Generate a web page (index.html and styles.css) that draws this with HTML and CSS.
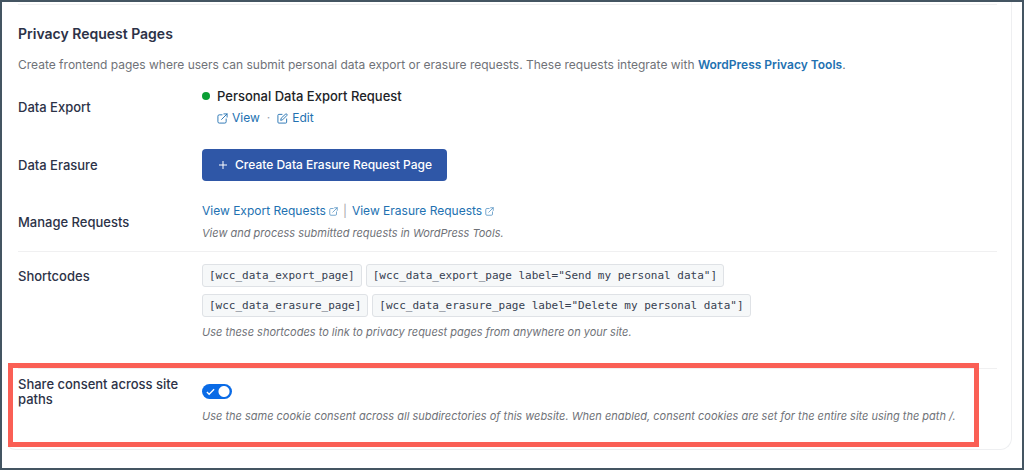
FILE: index.html
```
<!DOCTYPE html>
<html lang="en">
<head>
  <meta charset="utf-8">
  <title>Privacy Request Pages</title>
  <link rel="stylesheet" href="styles.css">
</head>
<body>
  <svg width="0" height="0" class="sprite">
    <symbol id="icon-external" viewBox="0 0 24 24">
      <path d="M11 4H5a3 3 0 0 0-3 3v12a3 3 0 0 0 3 3h12a3 3 0 0 0 3-3v-6M15 2h7v7M22 2L10 14"/>
    </symbol>
    <symbol id="icon-edit" viewBox="0 0 24 24">
      <path d="M11 3H4a2 2 0 0 0-2 2v15a2 2 0 0 0 2 2h15a2 2 0 0 0 2-2v-7M18.500 2.500a2.100 2.100 0 0 1 3 3L12 15l-4 1 1-4z"/>
    </symbol>
  </svg>

  <main class="card">
    <h2>Privacy Request Pages</h2>
    <p class="intro">Create frontend pages where users can submit personal data export or erasure requests. These requests integrate with <a href="#">WordPress Privacy Tools</a>.</p>

    <div class="row row-export">
      <h3>Data Export</h3>
      <div class="field">
        <div class="page-status"><span class="dot"></span>Personal Data Export Request</div>
        <div class="page-actions">
          <a href="#"><svg class="icon"><use href="#icon-external"/></svg>View</a>
          <span class="sep">·</span>
          <a href="#"><svg class="icon"><use href="#icon-edit"/></svg>Edit</a>
        </div>
      </div>
    </div>

    <div class="row row-erasure">
      <h3>Data Erasure</h3>
      <div class="field">
        <button type="button" class="btn">
          <svg class="plus" viewBox="0 0 10 10"><path d="M5 1v8M1 5h8"/></svg>
          Create Data Erasure Request Page
        </button>
      </div>
    </div>

    <div class="row row-manage">
      <h3>Manage Requests</h3>
      <div class="field">
        <div class="links">
          <a href="#">View Export Requests<svg class="icon"><use href="#icon-external"/></svg></a>
          <span class="bar">|</span>
          <a href="#">View Erasure Requests<svg class="icon"><use href="#icon-external"/></svg></a>
        </div>
        <p class="help">View and process submitted requests in WordPress Tools.</p>
      </div>
    </div>

    <div class="row row-codes">
      <h3>Shortcodes</h3>
      <div class="field">
        <div class="codes">
          <code>[wcc_data_export_page]</code>
          <code>[wcc_data_export_page label="Send my personal data"]</code>
        </div>
        <div class="codes">
          <code>[wcc_data_erasure_page]</code>
          <code>[wcc_data_erasure_page label="Delete my personal data"]</code>
        </div>
        <p class="help">Use these shortcodes to link to privacy request pages from anywhere on your site.</p>
      </div>
    </div>

    <div class="row row-share">
      <label for="share-consent">Share consent across site paths</label>
      <div class="field">
        <div class="switch">
          <input type="checkbox" id="share-consent" checked>
          <svg class="check" viewBox="0 0 10 10"><path d="M1 5.500l2.500 2.500L9 2.500"/></svg>
        </div>
        <p class="help">Use the same cookie consent across all subdirectories of this website. When enabled, consent cookies are set for the entire site using the path /.</p>
      </div>
    </div>
  </main>
</body>
</html>
```
FILE: styles.css
```
* {
  box-sizing: border-box;
}

body {
  margin: 0;
  min-height: 100vh;
  padding: 0 10px 18px 2px;
  border: 2px solid #445562;
  background: #fff;
  color: #2c3247;
  font-family: Inter, sans-serif;
  font-size: 12px;
  line-height: 16px;
}

.sprite {
  position: absolute;
}

.card {
  padding: 2px 14px 0 13px;
  border: 1px solid #eeeff1;
  border-top: 0;
  border-left-color: transparent;
  border-radius: 0 0 12px 12px;
}

h2 {
  margin: 0;
  padding-top: 19px;
  border-top: 1px solid #f0f0f1;
  font-size: 14px;
  font-weight: 600;
  line-height: 20px;
}

h3,
label {
  margin: 0;
  font-size: 13px;
  font-weight: 500;
  line-height: 15px;
}

a {
  color: #2271b1;
  text-decoration: none;
}

.intro {
  margin: 13px 0 0;
  color: #6f7278;
}

.intro a {
  font-weight: 600;
}

.row {
  display: grid;
  grid-template-columns: 172px 1fr;
  column-gap: 12px;
  align-items: center;
}

.row-export {
  margin-top: 15px;
}

.page-status,
.page-actions,
.page-actions a {
  display: flex;
  align-items: center;
}

.page-status {
  gap: 7px;
  color: #1d2327;
  font-size: 13px;
  font-weight: 500;
}

.dot {
  width: 8px;
  height: 8px;
  border-radius: 50%;
  background: #0a9f35;
}

.page-actions {
  gap: 7px;
  margin: 6px 0 0 15px;
}

.page-actions a {
  gap: 4px;
}

.sep {
  color: #9ca3af;
}

.icon {
  width: 11px;
  height: 11px;
  fill: none;
  stroke: currentColor;
  stroke-width: 2;
  stroke-linecap: round;
  stroke-linejoin: round;
}

.row-erasure {
  margin-top: 23px;
}

.btn {
  display: flex;
  align-items: center;
  gap: 7px;
  padding: 8px 15px 8px 16px;
  border: 0;
  border-radius: 4px;
  background: #2f57a7;
  color: #fff;
  font: 500 12px/16px Inter, sans-serif;
  cursor: pointer;
}

.plus {
  width: 10px;
  height: 10px;
  fill: none;
  stroke: #fff;
}

.row-manage {
  padding: 22px 0 10px;
  border-bottom: 1px solid #f0f0f1;
}

.links,
.links a {
  display: flex;
  align-items: center;
}

.links {
  gap: 5px;
}

.links a {
  gap: 3px;
}

.links .icon {
  width: 9px;
  height: 9px;
  opacity: 0.8;
}

.bar {
  color: #a7aaad;
}

.help {
  margin: 6px 0 0;
  color: #6f7278;
  font-size: 11px;
  font-style: italic;
}

.row-codes {
  align-items: start;
  padding: 12px 0 28px;
  border-bottom: 1px solid #f0f0f1;
}

.row-codes h3 {
  padding-top: 5px;
}

.codes {
  display: flex;
  gap: 4px;
  margin-bottom: 7px;
}

code {
  padding: 3px 6px;
  border: 1px solid #dfe2e6;
  border-radius: 3px;
  background: #f6f8f9;
  color: #374151;
  font: 11px/15px "DejaVu Sans Mono", monospace;
}

.row-share {
  position: relative;
  align-items: start;
  padding: 8px 0 25px;
}

/* highlight frame over the row */
.row-share::after {
  content: "";
  position: absolute;
  top: -6px;
  right: 18px;
  bottom: 2px;
  left: -10px;
  border: 5px solid #fa5f55;
  pointer-events: none;
}

.switch {
  position: relative;
  display: flex;
  width: 30px;
  margin-top: 7px;
}

.switch input {
  appearance: none;
  width: 30px;
  height: 15px;
  margin: 0;
  border-radius: 8px;
  background: #9ca3af;
}

.switch input:checked {
  background: radial-gradient(circle at 22px 50%, #fff 5px, #0a6be6 6px);
}

.check {
  position: absolute;
  top: 3px;
  left: 4px;
  width: 9px;
  height: 9px;
  fill: none;
  stroke: #fff;
  stroke-width: 1.5;
  pointer-events: none;
}

.row-share .help {
  margin-top: 9px;
}
```
